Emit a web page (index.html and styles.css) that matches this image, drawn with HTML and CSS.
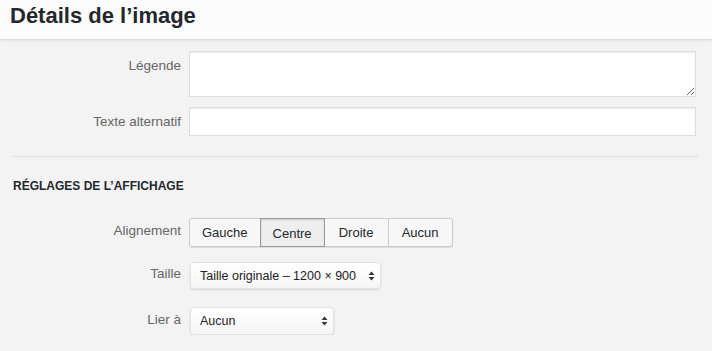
FILE: index.html
```html
<!DOCTYPE html>
<html lang="fr">
<head>
    <meta charset="UTF-8">
    <meta name="viewport" content="width=device-width, initial-scale=1.0">
    <title>Détails de l’image</title>
    <link rel="stylesheet" href="styles.css">
</head>
<body>
    <div class="modal-header">
        <h1>Détails de l’image</h1>
    </div>

    <div class="settings">
        <label class="setting setting-top">
            <span class="name">Légende</span>
            <textarea class="field field-caption"></textarea>
        </label>
        <label class="setting">
            <span class="name">Texte alternatif</span>
            <input type="text" class="field">
        </label>

        <hr class="divider">

        <h2>Réglages de l’affichage</h2>

        <div class="setting setting-align">
            <span class="name">Alignement</span>
            <div class="button-group">
                <button>Gauche</button>
                <button class="active">Centre</button>
                <button>Droite</button>
                <button>Aucun</button>
            </div>
        </div>

        <label class="setting setting-size">
            <span class="name">Taille</span>
            <span class="select-wrap">
                <select class="select select-size">
                    <option>Taille originale – 1200 × 900</option>
                </select>
                <svg class="select-arrows" width="7" height="10" viewBox="0 0 7 10">
                    <path d="M3.5 0.5 L6.5 4 H0.5 Z M3.5 9.5 L6.5 6 H0.5 Z" fill="#333"/>
                </svg>
            </span>
        </label>

        <label class="setting setting-link">
            <span class="name">Lier à</span>
            <span class="select-wrap">
                <select class="select select-link">
                    <option>Aucun</option>
                </select>
                <svg class="select-arrows" width="7" height="10" viewBox="0 0 7 10">
                    <path d="M3.5 0.5 L6.5 4 H0.5 Z M3.5 9.5 L6.5 6 H0.5 Z" fill="#333"/>
                </svg>
            </span>
        </label>
    </div>
</body>
</html>
```

FILE: styles.css
```css
body {
    font-family: "Liberation Sans", Arial, sans-serif;
    margin: 0;
    background-color: #f3f3f3;
    color: #23282d;
    font-size: 13px;
}
.modal-header {
    height: 39px;
    padding-left: 10px;
    background-color: #fcfcfc;
    border-bottom: 1px solid #ddd;
    box-shadow: 0 1px 3px rgba(0, 0, 0, 0.07);
}
h1 {
    margin: 0;
    font-size: 22px;
    line-height: 32px;
    font-weight: bold;
    color: #23282d;
}
.settings {
    padding-top: 11px;
}
.setting {
    display: flex;
    align-items: center;
}
.setting-top {
    align-items: flex-start;
}
.setting + .setting {
    margin-top: 10px;
}
.name {
    width: 181px;
    margin-right: 8px;
    text-align: right;
    color: #666;
    font-size: 13.5px;
    line-height: 18px;
    flex-shrink: 0;
}
.setting-top .name {
    padding-top: 6px;
}
.field {
    box-sizing: border-box;
    width: 507px;
    height: 29px;
    margin: 0;
    border: 1px solid #ddd;
    background-color: #fff;
    box-shadow: inset 0 1px 2px rgba(0, 0, 0, 0.07);
    font: inherit;
}
.field-caption {
    height: 46px;
    resize: vertical;
}
.divider {
    margin: 20px 14px 0 13px;
    border: 0;
    border-top: 1px solid #ddd;
}
h2 {
    margin: 21px 0 0 13px;
    font-size: 12px;
    line-height: 16px;
    font-weight: bold;
    text-transform: uppercase;
    color: #23282d;
}
.setting.setting-align {
    margin-top: 24px;
}
.setting-align .name {
    margin-top: -3px;
}
.button-group {
    display: flex;
    border-radius: 3px;
    box-shadow: 0 1px 0 #ddd;
}
.button-group button {
    height: 29px;
    min-width: 64px;
    padding: 0 12px;
    margin: 0;
    font: inherit;
    color: #23282d;
    background-color: #f7f7f7;
    border: 1px solid #ccc;
    border-left-width: 0;
    cursor: pointer;
}
.button-group button:first-child {
    border-left-width: 1px;
    border-radius: 3px 0 0 3px;
}
.button-group button:last-child {
    border-radius: 0 3px 3px 0;
}
.button-group button.active {
    background-color: #eee;
    border-color: #999;
    border-left-width: 1px;
    margin-left: -1px;
    padding-top: 2px;
    box-shadow: inset 0 1px 2px rgba(0, 0, 0, 0.15);
}
.setting.setting-size {
    margin-top: 15px;
}
.setting.setting-link {
    margin-top: 18px;
}
.setting-size .name,
.setting-link .name {
    margin-top: -3px;
}
.select-wrap {
    position: relative;
    margin-left: 1px;
}
.select {
    -webkit-appearance: none;
    appearance: none;
    box-sizing: border-box;
    height: 27px;
    margin: 0;
    padding: 0 16px 0 9px;
    font: inherit;
    font-size: 12.5px;
    color: #222;
    background: linear-gradient(#fff, #f6f6f6);
    border: 1px solid #e2e2e2;
    border-radius: 4px;
    box-shadow: 0 1px 2px rgba(0, 0, 0, 0.12);
}
.select-size {
    width: 191px;
}
.select-link {
    width: 144px;
    height: 28px;
}
.select-arrows {
    position: absolute;
    right: 6px;
    top: 50%;
    margin-top: -5px;
    pointer-events: none;
}
```
